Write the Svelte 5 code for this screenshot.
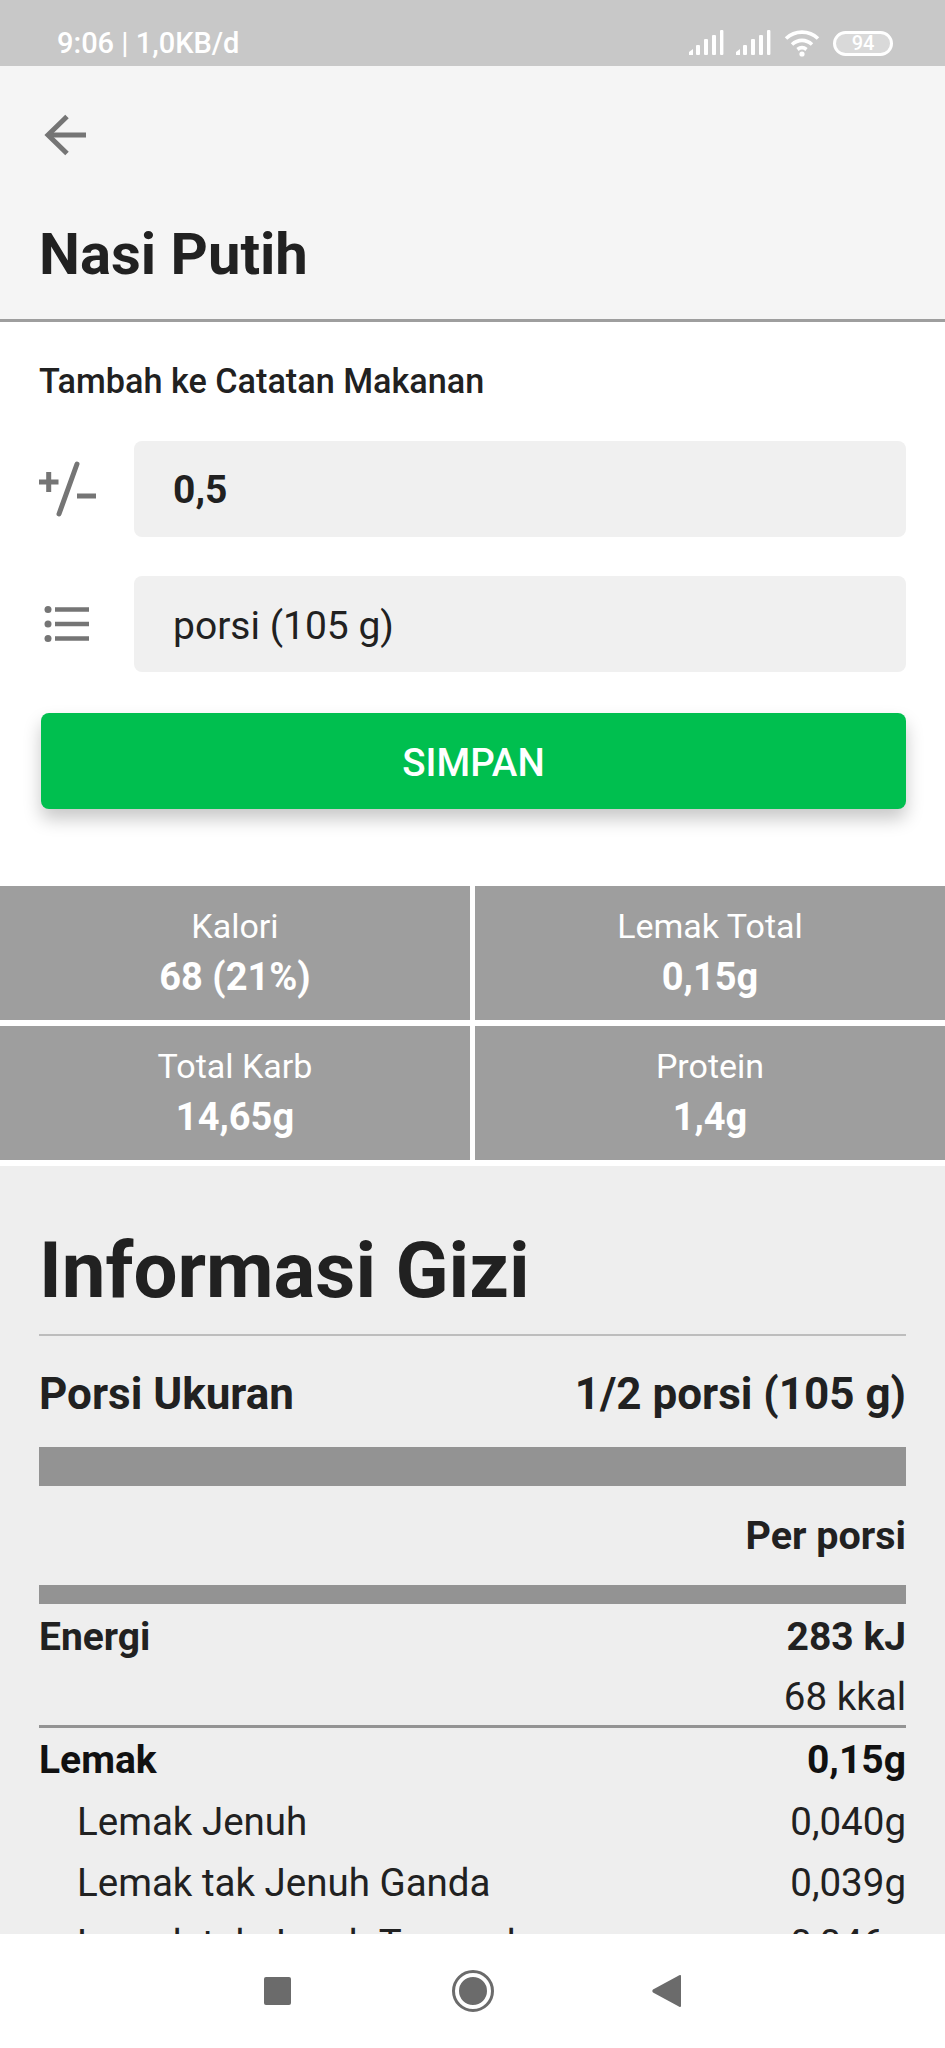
<script>
    const macros = [
        { label: "Kalori", value: "68 (21%)" },
        { label: "Lemak Total", value: "0,15g" },
        { label: "Total Karb", value: "14,65g" },
        { label: "Protein", value: "1,4g" },
    ];

    const fats = [
        { name: "Lemak Jenuh", value: "0,040g" },
        { name: "Lemak tak Jenuh Ganda", value: "0,039g" },
        { name: "Lemak tak Jenuh Tunggal", value: "0,046g" },
    ];
</script>

<div class="screen">
    <div class="statusbar">
        <span class="clock">9:06 | 1,0KB/d</span>
        <div class="status-icons">
            {#each [0, 1] as n}
                <svg class="signal" width="36" height="26" viewBox="0 0 36 26" fill="#fff">
                    <path d="M1 25v-3l4-3v6z" />
                    <rect x="8" y="15" width="4" height="10" rx="1" />
                    <rect x="16" y="9" width="4" height="16" rx="1" />
                    <rect x="24" y="5" width="4" height="20" rx="1" />
                    <rect x="32" y="0" width="3.4" height="25" rx="1" />
                </svg>
            {/each}
            <svg class="wifi" width="36" height="28" viewBox="0 0 36 28" fill="none" stroke="#fff" stroke-width="3.6">
                <path d="M2 9.5c9-8.5 23-8.5 32 0" />
                <path d="M8 15.5c6-5.5 14-5.5 20 0" />
                <path d="M13.5 20.5c2.800-2.300 6.200-2.300 9 0" />
                <circle cx="18" cy="25" r="2.600" fill="#fff" stroke="none" />
            </svg>
            <div class="battery"><span>94</span></div>
        </div>
    </div>

    <div class="scroll">
        <header>
            <svg class="back" width="44" height="44" viewBox="0 0 44 44" fill="none" stroke="#757575" stroke-width="5">
                <path d="M42 22H5" />
                <path d="M23 3.500 4 22l19 18.500" />
            </svg>
            <h1>Nasi Putih</h1>
        </header>

        <section class="add">
            <h2>Tambah ke Catatan Makanan</h2>
            <div class="field-row">
                <svg class="field-icon" width="60" height="56" viewBox="0 0 60 56" fill="none" stroke="#757575" stroke-width="5">
                    <path d="M0 21h19.500M9.700 11v20" />
                    <path d="M38 3 20 53" stroke-linecap="round" />
                    <path d="M38 35h19" />
                </svg>
                <div class="field strong">0,5</div>
            </div>
            <div class="field-row">
                <svg class="field-icon" width="60" height="40" viewBox="0 0 60 40" fill="none" stroke="#757575" stroke-width="4.500">
                    <circle cx="9" cy="5.500" r="3.500" fill="#757575" stroke="none" />
                    <circle cx="9" cy="20" r="3.500" fill="#757575" stroke="none" />
                    <circle cx="9" cy="34.500" r="3.500" fill="#757575" stroke="none" />
                    <path d="M16 5.500h34M16 20h34M16 34.500h34" />
                </svg>
                <div class="field">porsi (105 g)</div>
            </div>
            <button>SIMPAN</button>
        </section>

        <div class="macros">
            {#each macros as m}
                <div class="macro">
                    <span class="macro-label">{m.label}</span>
                    <span class="macro-value">{m.value}</span>
                </div>
            {/each}
        </div>

        <section class="nutrition">
            <h3>Informasi Gizi</h3>
            <div class="serving">
                <span>Porsi Ukuran</span>
                <span>1/2 porsi (105 g)</span>
            </div>
            <div class="bar thick"></div>
            <div class="per">Per porsi</div>
            <div class="bar thin"></div>
            <div class="row bold first"><span>Energi</span><span>283 kJ</span></div>
            <div class="row end"><span></span><span>68 kkal</span></div>
            <div class="row bold ruled"><span>Lemak</span><span>0,15g</span></div>
            {#each fats as f}
                <div class="row sub"><span>{f.name}</span><span>{f.value}</span></div>
            {/each}
        </section>
    </div>

    <nav>
        <span class="nav-square"></span>
        <span class="nav-circle"></span>
        <svg width="30" height="32" viewBox="0 0 30 32" fill="#6b6b6b">
            <path d="M29 1v30a1 1 0 0 1-1.700.700L1 17.400a2 2 0 0 1 0-2.800L27.300.300A1 1 0 0 1 29 1z" />
        </svg>
    </nav>
</div>

<style>
    :global(body) {
        margin: 0;
        background: #fff;
    }

    .screen {
        width: 945px;
        height: 2048px;
        display: flex;
        flex-direction: column;
        overflow: hidden;
        font-family: Roboto, "Liberation Sans", sans-serif;
        color: #212121;
    }

    .statusbar {
        height: 66px;
        flex: none;
        box-sizing: border-box;
        background: #c8c8c8;
        display: flex;
        align-items: center;
        justify-content: space-between;
        padding: 20px 52px 0 57px;
        color: #fff;
    }

    .clock {
        font-size: 29px;
        font-weight: 500;
    }

    .status-icons {
        display: flex;
        align-items: center;
        gap: 11px;
    }

    .wifi {
        margin-left: 2px;
    }

    .battery {
        width: 60px;
        height: 25px;
        box-sizing: border-box;
        border: 3px solid #fff;
        border-radius: 13px;
        background: #d9d9d9;
        display: flex;
        align-items: center;
        justify-content: center;
        margin-left: 2px;
        font-size: 20px;
        font-weight: 500;
    }

    .scroll {
        flex: 1;
        min-height: 0;
        overflow: hidden;
    }

    header {
        height: 256px;
        box-sizing: border-box;
        background: #f5f5f5;
        border-bottom: 3px solid #9e9e9e;
        padding: 47px 39px 0;
    }

    .back {
        display: block;
        margin-left: 5px;
    }

    h1 {
        margin: 64px 0 0;
        font-size: 58px;
        font-weight: 700;
        line-height: 66px;
    }

    .add {
        padding: 40px 39px 0;
        height: 564px;
        box-sizing: border-box;
    }

    h2 {
        margin: 0 0 41px;
        font-size: 34.2px;
        font-weight: 500;
        line-height: 38px;
    }

    .field-row {
        display: flex;
        align-items: center;
        gap: 35px;
        margin-bottom: 39px;
    }

    .field-icon {
        flex: none;
    }

    .field {
        flex: 1;
        height: 96px;
        box-sizing: border-box;
        background: #f0f0f0;
        border-radius: 8px;
        display: flex;
        align-items: center;
        padding: 3px 0 0 39px;
        font-size: 39px;
    }

    .strong {
        font-weight: 700;
        padding-top: 1px;
    }

    button {
        display: block;
        width: 865px;
        height: 96px;
        margin: 41px 0 0 2px;
        padding: 2px 0 0;
        border: none;
        border-radius: 8px;
        background: #00bf4f;
        color: #fff;
        font: 500 38.5px Roboto, sans-serif;
        box-shadow: 0 10px 18px rgba(0, 0, 0, 0.22);
    }

    .macros {
        display: grid;
        grid-template-columns: 470px 1fr;
        column-gap: 5px;
        row-gap: 6px;
        padding-bottom: 6px;
    }

    .macro {
        height: 134px;
        box-sizing: border-box;
        padding-bottom: 3px;
        background: #9e9e9e;
        color: #fff;
        display: flex;
        flex-direction: column;
        align-items: center;
        justify-content: center;
        line-height: 48px;
    }

    .macro-label {
        font-size: 34px;
        margin-bottom: 3px;
    }

    .macro-value {
        font-size: 38px;
        font-weight: 700;
    }

    .nutrition {
        background: #eeeeee;
        padding: 60px 39px 0;
    }

    h3 {
        margin: 0;
        font-size: 78px;
        font-weight: 700;
        line-height: 90px;
        padding-bottom: 18px;
        border-bottom: 2px solid #bdbdbd;
    }

    .serving {
        display: flex;
        justify-content: space-between;
        font-size: 44px;
        font-weight: 700;
        padding: 34px 0 29px;
        line-height: 48px;
    }

    .bar {
        background: #939393;
    }

    .thick {
        height: 39px;
    }

    .thin {
        height: 19px;
    }

    .per {
        text-align: right;
        font-size: 39.5px;
        font-weight: 700;
        line-height: 99px;
    }

    .row {
        display: flex;
        justify-content: space-between;
        font-size: 39px;
        line-height: 61px;
    }

    .bold {
        font-weight: 700;
    }

    .first {
        padding-top: 3px;
    }

    .end {
        font-size: 38.5px;
        line-height: 57px;
        border-bottom: 3px solid #939393;
    }

    .ruled {
        color: #111;
        padding-top: 2px;
    }

    .sub {
        padding-left: 38px;
        font-size: 38.5px;
    }

    nav {
        flex: none;
        height: 114px;
        background: #fff;
        display: flex;
        align-items: center;
        justify-content: center;
        gap: 0;
    }

    .nav-square {
        width: 27px;
        height: 28px;
        border-radius: 2px;
        background: #6b6b6b;
    }

    .nav-circle {
        width: 28px;
        height: 28px;
        border-radius: 50%;
        background: #6b6b6b;
        border: 4px solid #fff;
        outline: 3px solid #6b6b6b;
        margin: 0 161px 0 164px;
    }
</style>
